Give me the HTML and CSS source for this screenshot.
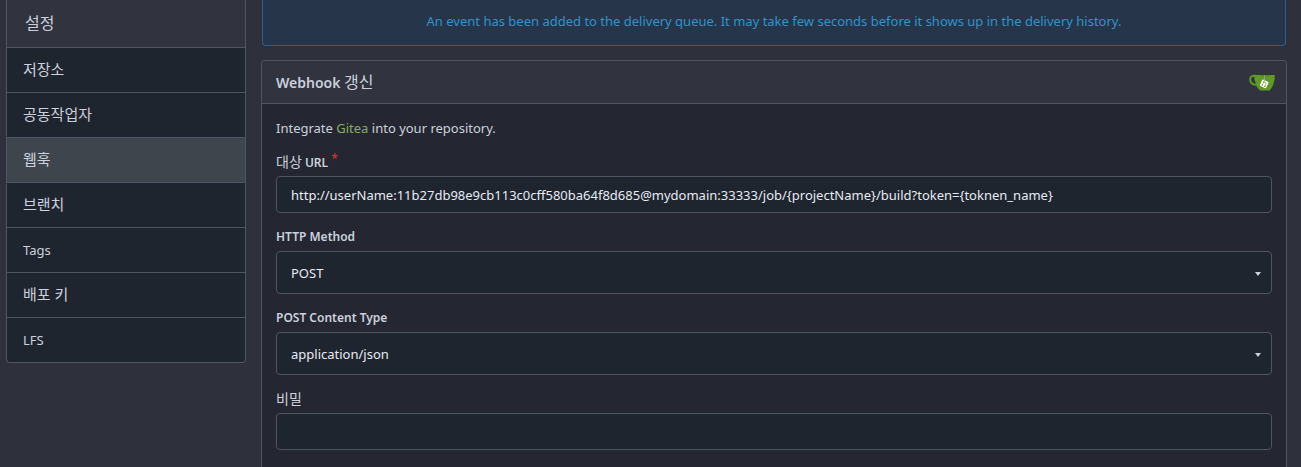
FILE: index.html
```html
<!DOCTYPE html>
<html lang="ko">
<head>
    <meta charset="UTF-8">
    <meta name="viewport" content="width=device-width, initial-scale=1.0">
    <title>Webhook 갱신</title>
    <link rel="stylesheet" href="styles.css">
</head>
<body>
    <div class="page">
        <nav class="menu">
            <div class="menu-header">설정</div>
            <a class="item ko" href="#">저장소</a>
            <a class="item ko" href="#">공동작업자</a>
            <a class="item ko active" href="#">웹훅</a>
            <a class="item ko" href="#">브랜치</a>
            <a class="item" href="#">Tags</a>
            <a class="item ko" href="#">배포 키</a>
            <a class="item" href="#">LFS</a>
        </nav>
        <main class="content">
            <div class="message">An event has been added to the delivery queue. It may take few seconds before it shows up in the delivery history.</div>
            <section class="panel">
                <h4 class="panel-header">
                    <span>Webhook <span class="title-ko">갱신</span></span>
                    <svg class="logo" viewBox="0 0 640 640" aria-hidden="true">
                        <path fill="#fff" d="m395.9 484.2-126.9-61c-12.5-6-17.9-21.2-11.8-33.8l61-126.9c6-12.5 21.2-17.9 33.8-11.8 17.2 8.3 27.1 13 27.1 13l-.1-109.2 16.7-.1.1 117.1s57.4 24.2 83.1 40.1c3.7 2.3 10.2 6.8 12.9 14.4 2.1 6.1 2 13.1-1 19.3l-61 126.9c-6.2 12.7-21.4 18.1-33.9 12"/>
                        <path fill="#609926" d="M622.7 149.8c-4.1-4.1-9.6-4-9.6-4s-117.2 6.6-177.9 8c-13.3.3-26.5.6-39.6.7v117.2c-5.5-2.6-11.1-5.3-16.6-7.9 0-36.4-.1-109.2-.1-109.2-29 .4-89.2-2.2-89.2-2.2s-141.4-7.1-156.8-8.5c-9.8-.6-22.5-2.1-39 1.5-8.7 1.8-33.5 7.4-53.8 26.9C-4.9 212.4 6.6 276.2 8 285.8c1.7 11.7 6.9 44.2 31.7 72.5 45.8 56.1 144.4 54.8 144.4 54.8s12.1 28.9 30.6 55.5c25 33.1 50.7 58.9 75.7 62 63 0 188.9-.1 188.9-.1s12 .1 28.3-10.3c14-8.5 26.5-23.4 26.5-23.4S547 483 565 451.5c5.5-9.7 10.1-19.1 14.1-28 0 0 55.2-117.1 55.2-231.1-1.1-34.5-9.6-40.6-11.6-42.6M125.6 353.9c-25.9-8.5-36.9-18.7-36.9-18.7S69.6 321.8 60 295.4c-16.5-44.2-1.4-71.2-1.4-71.2s8.4-22.5 38.5-30c13.8-3.7 31-3.1 31-3.1s7.1 59.4 15.7 94.2c7.2 29.2 24.8 77.7 24.8 77.7s-26.1-3.1-43-9.1m300.3 107.6s-6.1 14.5-19.6 15.4c-5.8.4-10.3-1.2-10.3-1.2s-.3-.1-5.3-2.1l-112.9-55s-10.9-5.7-12.8-15.6c-2.2-8.1 2.7-18.1 2.7-18.1L322 273s4.8-9.7 12.2-13c.6-.3 2.3-1 4.5-1.5 8.1-2.1 18 2.8 18 2.8L467.4 315s12.6 5.7 15.3 16.2c1.9 7.4-.5 14-1.8 17.2-6.3 15.4-55 113.1-55 113.1"/>
                        <path fill="#609926" d="M326.8 380.1c-8.2.1-15.4 5.8-17.3 13.8s2 16.3 9.1 20c7.7 4 17.5 1.8 22.7-5.4 5.1-7.1 4.3-16.9-1.8-23.1l24-49.1c1.5.1 3.7.2 6.2-.5 4.1-.9 7.1-3.6 7.1-3.6 4.2 1.8 8.6 3.8 13.2 6.1 4.8 2.4 9.3 4.9 13.4 7.3.9.5 1.8 1.1 2.8 1.9 1.6 1.3 3.4 3.1 4.7 5.5 1.9 5.5-1.9 14.9-1.9 14.9-2.3 7.6-18.4 40.6-18.4 40.6-8.1-.2-15.3 5-17.7 12.5-2.6 8.1 1.1 17.3 8.9 21.3s17.4 1.7 22.5-5.3c5-6.8 4.6-16.3-1.1-22.6 1.9-3.7 3.7-7.4 5.6-11.3 5-10.4 13.5-30.4 13.5-30.4.9-1.7 5.7-10.3 2.7-21.3-2.5-11.4-12.6-16.7-12.6-16.7-12.2-7.9-29.2-15.2-29.2-15.2s0-4.1-1.1-7.1c-1.1-3.1-2.8-5.1-3.9-6.3 4.7-9.7 9.4-19.3 14.1-29-4.1-2-8.1-4-12.2-6.1-4.8 9.8-9.7 19.7-14.5 29.5-6.7-.1-12.9 3.5-16.1 9.4-3.4 6.3-2.7 14.1 1.9 19.8z"/>
                    </svg>
                </h4>
                <form class="panel-body">
                    <p>Integrate <a href="#">Gitea</a> into your repository.</p>
                    <div class="field">
                        <label for="payload_url"><span class="label-ko">대상</span> URL<span class="required">*</span></label>
                        <input id="payload_url" type="text" value="http://userName:11b27db98e9cb113c0cff580ba64f8d685@mydomain:33333/job/{projectName}/build?token={toknen_name}">
                    </div>
                    <div class="field">
                        <label for="http_method">HTTP Method</label>
                        <div class="dropdown">
                            <select id="http_method">
                                <option>POST</option>
                            </select>
                            <svg class="caret" viewBox="0 0 6 4" aria-hidden="true"><path d="M0 0h6L3 4z"/></svg>
                        </div>
                    </div>
                    <div class="field">
                        <label for="content_type">POST Content Type</label>
                        <div class="dropdown">
                            <select id="content_type">
                                <option>application/json</option>
                            </select>
                            <svg class="caret" viewBox="0 0 6 4" aria-hidden="true"><path d="M0 0h6L3 4z"/></svg>
                        </div>
                    </div>
                    <div class="field">
                        <label for="secret"><span class="label-ko">비밀</span></label>
                        <input id="secret" type="password">
                    </div>
                </form>
            </section>
        </main>
    </div>
</body>
</html>
```

FILE: styles.css
```css
* {
    margin: 0;
    padding: 0;
    box-sizing: border-box;
}

body {
    font-family: "Noto Sans", "Noto Sans CJK KR", sans-serif;
    font-size: 13px;
    line-height: 20px;
    background-color: #2e303c;
    color: #cbd0dc;
}

.page {
    display: flex;
    align-items: stretch;
    gap: 15px;
    min-height: 100vh;
    padding: 0 14px 0 6px;
}

/* sidebar */
.menu {
    flex: 0 0 240px;
    align-self: flex-start;
    border: 1px solid #515463;
    border-top: none;
    border-radius: 0 0 4px 4px;
    background-color: #1f252f;
    overflow: hidden;
}

.menu-header {
    height: 47px;
    padding: 0 18px;
    line-height: 46px;
    font-size: 16px;
    background-color: #31343f;
}

.item {
    display: block;
    height: 45px;
    padding: 0 16px;
    border-top: 1px solid #515463;
    line-height: 44px;
    color: #cbd0dc;
    text-decoration: none;
}

.item:hover,
.item.active {
    background-color: #3f454d;
}

.ko {
    font-size: 15px;
    line-height: 42px;
}

/* content */
.content {
    flex: 1;
    min-width: 0;
    display: flex;
    flex-direction: column;
    gap: 14px;
}

.message {
    margin: 0 1px;
    padding: 11px 20px 14px;
    border: 1px solid #2b5f8c;
    border-top: none;
    border-radius: 0 0 4px 4px;
    background-color: #27354b;
    color: #3292c8;
    text-align: center;
}

.panel {
    flex: 1;
    border: 1px solid #515463;
    border-bottom: none;
    border-radius: 4px 4px 0 0;
    background-color: #242731;
    overflow: hidden;
}

.panel-header {
    display: flex;
    align-items: center;
    justify-content: space-between;
    height: 43px;
    padding: 0 11px 0 14px;
    border-bottom: 1px solid #515463;
    background-color: #31343f;
    font-size: 14px;
    font-weight: 600;
}

.title-ko {
    font-size: 16px;
    font-weight: 400;
}

.logo {
    width: 26px;
    height: 26px;
}

.panel-body {
    padding: 14px;
}

.panel-body p {
    margin-bottom: 14px;
}

.panel-body a {
    color: #87ab63;
    text-decoration: none;
}

.field {
    margin-bottom: 14px;
}

.field label {
    display: block;
    height: 20px;
    margin-bottom: 4px;
    font-size: 12px;
    font-weight: 600;
}

.label-ko {
    font-size: 14px;
    font-weight: 400;
}

.required {
    margin-left: 3px;
    color: #db2828;
    vertical-align: top;
    line-height: 14px;
}

.field input,
.field select {
    display: block;
    width: 100%;
    height: 37px;
    padding: 0 14px;
    border: 1px solid #515463;
    border-radius: 4px;
    outline: none;
    background-color: #1f252f;
    color: #e6eaf2;
    font: inherit;
}

.field select {
    height: 43px;
    appearance: none;
}

.dropdown {
    position: relative;
}

.caret {
    position: absolute;
    top: 21px;
    right: 11px;
    width: 6px;
    height: 4px;
    fill: #cbd0dc;
    pointer-events: none;
}
```
